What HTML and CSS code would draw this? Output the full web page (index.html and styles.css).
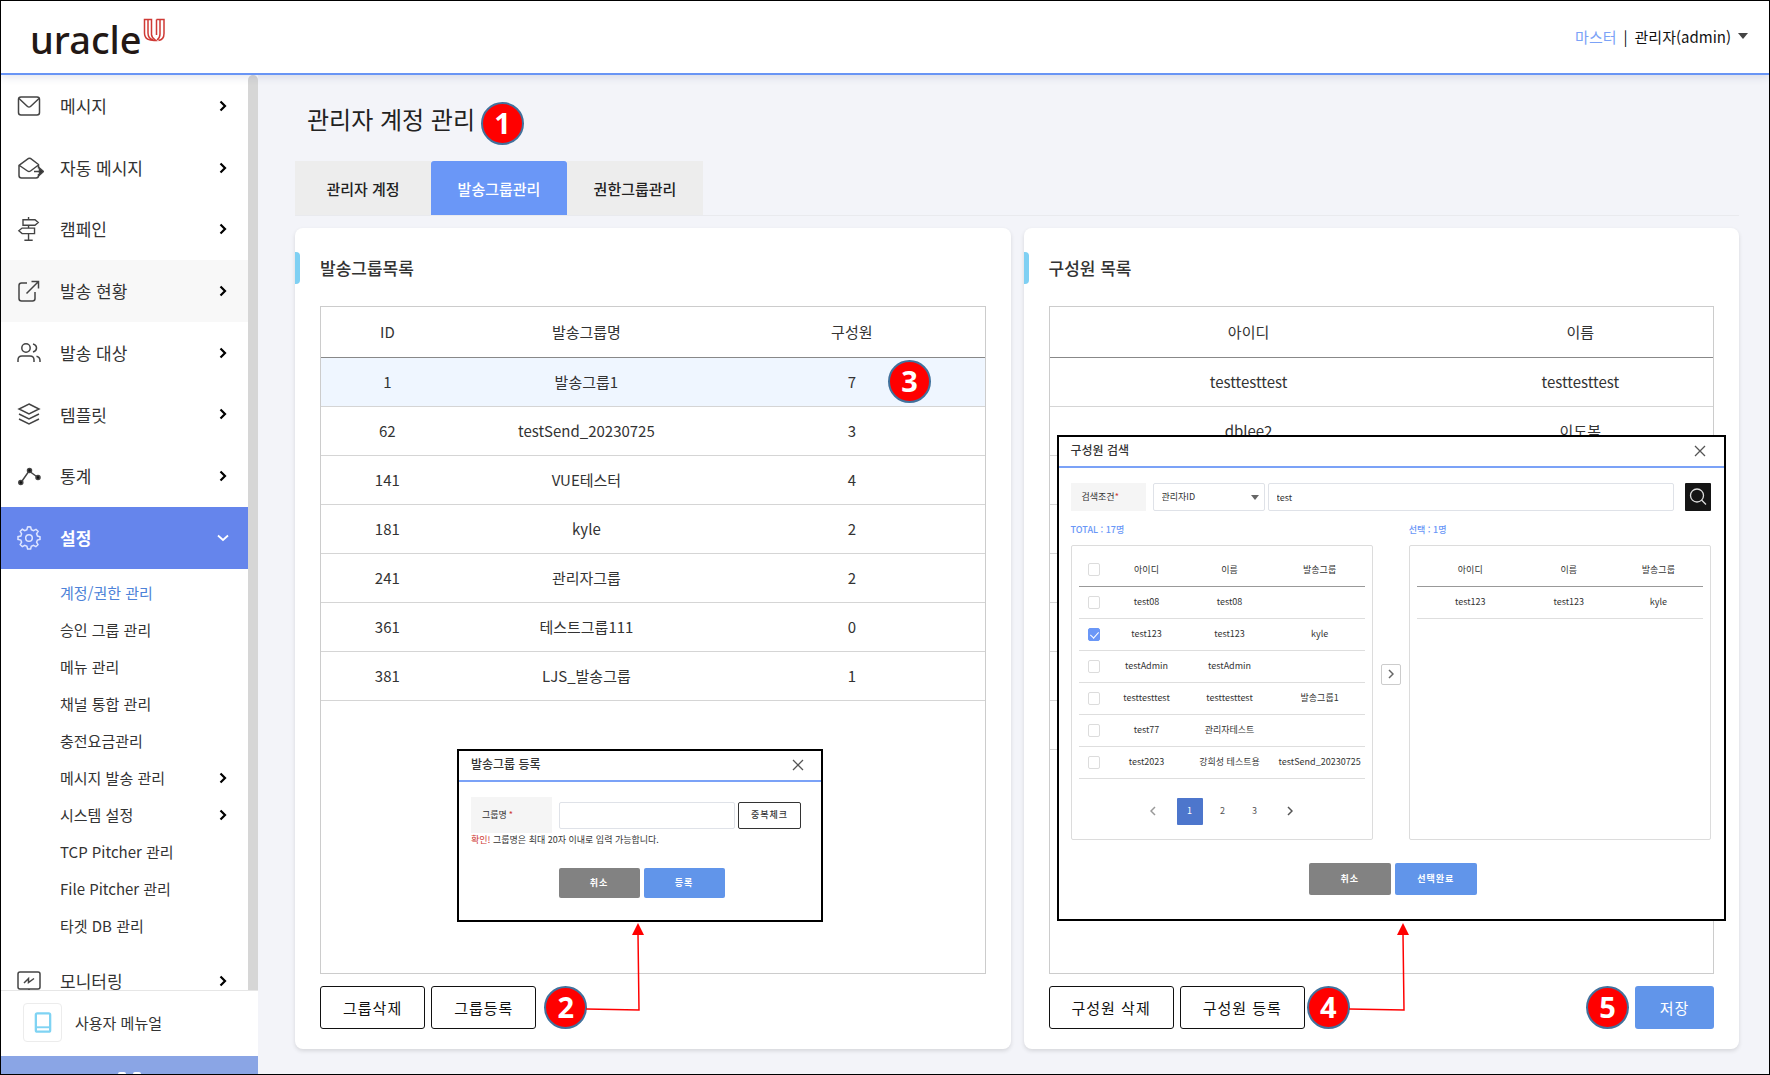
FILE: index.html
```html
<!DOCTYPE html>
<html lang="ko">
<head>
<meta charset="utf-8">
<title>관리자 계정 관리</title>
<link rel="stylesheet" href="styles.css">
</head>
<body>
<svg class="sprite" aria-hidden="true">
  <symbol id="chev" viewBox="0 0 8 12"><path d="M1.5 1.5 6 6l-4.500 4.500" fill="none" stroke="currentColor" stroke-width="2.200"/></symbol>
  <symbol id="thin-chev" viewBox="0 0 6 10"><path d="M1 1l4 4-4 4" fill="none" stroke="currentColor" stroke-width="1.500"/></symbol>
  <symbol id="close" viewBox="0 0 12 12"><path d="M1 1l10 10M11 1 1 11" fill="none" stroke="currentColor" stroke-width="1.300"/></symbol>
</svg>

<header class="topbar">
  <a class="logo" href="#" aria-label="uracle U"><span>uracle</span>
    <svg class="logo-mark" viewBox="0 0 22 24"><path d="M1.500 1.500h7v15c0 3.500 3.500 5 4.500 6-7 .5-11.500-1.500-11.500-7.500zM5 2v13c0 4 2 6 5 7M13.500 1.500h7.500v14c0 4-2 6.500-5.500 7M17 2v14c0 3-1.500 5-3 6M13.500 1.500v15.500" fill="none" stroke="#cf3a35" stroke-width="1.500"/></svg>
  </a>
  <div class="user"><span class="role">마스터</span><span class="bar">|</span><button class="user-name" type="button">관리자(admin)<i class="caret"></i></button></div>
</header>

<div class="shell">
  <aside class="sidebar">
    <div class="menu-scroll">
      <nav class="menu">
        <div class="menu-main">
          <a class="item" href="#"><svg class="ico" viewBox="0 0 24 24"><rect x="1.500" y="3" width="21" height="18" rx="2.500"/><path d="M2 4.500l8.500 8q1.500 1.200 3 0l8.500-8"/></svg>메시지<svg class="chev"><use href="#chev"/></svg></a>
          <a class="item" href="#"><svg class="ico wide" viewBox="0 0 27 24"><path d="M21.500 18v1.500q0 2.500-2.500 2.500H4.500Q2 22 2 19.500V9.500L11.500 2.500q1-.5 2 0L21.500 8.500v4M2.500 9.500l8 5.500q1.500 1 3 0l8-6M17 15.500h9"/><path d="M22.500 12l4 3.500-4 3.500z" fill="#333"/></svg>자동 메시지<svg class="chev"><use href="#chev"/></svg></a>
          <a class="item" href="#"><svg class="ico" viewBox="0 0 24 26"><path d="M11.500 0v3M11.500 9v3M11.500 18v7M7 25.200h9M5.500 3H18.500l3.500 3-3.500 3H5.500zM18 12H4.500L1 15l3.500 3H18z"/></svg>캠페인<svg class="chev"><use href="#chev"/></svg></a>
          <a class="item hovered" href="#"><svg class="ico" viewBox="0 0 24 24"><path d="M10 4H4.500Q2 4 2 6.500v13Q2 22 4.500 22h11q2.500 0 2.500-2.500V13M9.500 14.500 21 3M14.500 2.500H21.500V9.500"/></svg>발송 현황<svg class="chev"><use href="#chev"/></svg></a>
          <a class="item" href="#"><svg class="ico" viewBox="0 0 24 24"><circle cx="9" cy="7" r="4.200"/><path d="M1 21v-2q0-4 4-4h8q4 0 4 4v2M16 3q3.500 1 3.500 4T16 11M19.500 15.200q3.500.8 3.500 4.300V21"/></svg>발송 대상<svg class="chev"><use href="#chev"/></svg></a>
          <a class="item" href="#"><svg class="ico" viewBox="0 0 24 24"><path d="M12 2l10 5-10 5L2 7zM2 12l10 5 10-5M2 17l10 5 10-5"/></svg>템플릿<svg class="chev"><use href="#chev"/></svg></a>
          <a class="item" href="#"><svg class="ico" viewBox="0 0 24 24"><path d="M4 18.500 12 7l9 6.500"/><g fill="#111"><circle cx="3.800" cy="18.500" r="2"/><circle cx="12.500" cy="6.500" r="2"/><circle cx="21" cy="13.500" r="2"/></g></svg>통계<svg class="chev"><use href="#chev"/></svg></a>
        </div>
        <a class="item current" href="#"><svg class="ico" viewBox="0 0 24 24"><path d="M12 .8l1.600.2.800 2.800 2 .9L19 3.300l2.100 2.100-1.500 2.500.9 2.100 2.500.700v2.700l-2.600.700-.8 2.100 1.400 2.500-2.100 2-2.500-1.400-2.100.9-.7 2.700h-3l-.7-2.700-2.100-.9L5.300 20.700l-2.100-2 1.400-2.500-.8-2.100-2.800-.700v-2.700l2.800-.700.8-2.100L3.200 5.400l2.100-2.100 2.500 1.400 2.100-.9.700-2.900z"/><circle cx="12" cy="12" r="3.300"/></svg>설정<svg class="chev-down" viewBox="0 0 12 8"><path d="M1 1.500l5 4.500 5-4.500" fill="none" stroke="#fff" stroke-width="1.800"/></svg></a>
        <div class="submenu">
          <a class="sub active" href="#">계정/권한 관리</a>
          <a class="sub" href="#">승인 그룹 관리</a>
          <a class="sub" href="#">메뉴 관리</a>
          <a class="sub" href="#">채널 통합 관리</a>
          <a class="sub" href="#">충전요금관리</a>
          <a class="sub" href="#">메시지 발송 관리<svg class="chev"><use href="#chev"/></svg></a>
          <a class="sub" href="#">시스템 설정<svg class="chev"><use href="#chev"/></svg></a>
          <a class="sub" href="#">TCP Pitcher 관리</a>
          <a class="sub" href="#">File Pitcher 관리</a>
          <a class="sub" href="#">타겟 DB 관리</a>
        </div>
        <a class="item" href="#"><svg class="ico" viewBox="0 0 24 24"><rect x="1" y="3" width="22" height="17" rx="2"/><path d="M12 20v3M7 14l4.500-4.500v4L17 9.500" /></svg>모니터링<svg class="chev"><use href="#chev"/></svg></a>
      </nav>
      <div class="thumb"></div>
    </div>
    <a class="manual" href="#"><span class="manual-ico"><svg viewBox="0 0 18 22"><rect x="1.500" y="1.500" width="15" height="19" rx="1.500" fill="none" stroke="#7fd3f3" stroke-width="2.400"/><path d="M2 16h14" stroke="#7fd3f3" stroke-width="2"/></svg></span>사용자 메뉴얼</a>
    <button class="dash" type="button" aria-label="대시보드"><i></i><i></i></button>
  </aside>

  <main class="content">
    <h1 class="title">관리자 계정 관리<span class="badge">1</span></h1>
    <div class="tabs" role="tablist">
      <button class="tab" role="tab" type="button">관리자 계정</button>
      <button class="tab on" role="tab" type="button" aria-selected="true">발송그룹관리</button>
      <button class="tab" role="tab" type="button">권한그룹관리</button>
    </div>

    <div class="cards">
      <section class="card">
        <h2 class="card-title">발송그룹목록</h2>
        <div class="listbox">
          <table class="grid">
            <colgroup><col class="w20"><col class="w40"><col class="w40"></colgroup>
            <thead><tr><th>ID</th><th>발송그룹명</th><th>구성원</th></tr></thead>
            <tbody>
              <tr class="selected"><td>1</td><td>발송그룹1</td><td>7</td></tr>
              <tr><td>62</td><td>testSend_20230725</td><td>3</td></tr>
              <tr><td>141</td><td>VUE테스터</td><td>4</td></tr>
              <tr><td>181</td><td>kyle</td><td>2</td></tr>
              <tr><td>241</td><td>관리자그룹</td><td>2</td></tr>
              <tr><td>361</td><td>테스트그룹111</td><td>0</td></tr>
              <tr><td>381</td><td>LJS_발송그룹</td><td>1</td></tr>
            </tbody>
          </table>
        </div>
        <div class="actions">
          <button class="btn" type="button">그룹삭제</button>
          <button class="btn" type="button">그룹등록</button>
          <span class="badge">2</span>
        </div>
        <span class="badge pin-row">3</span>

        <div class="popup popup-group" role="dialog" aria-label="발송그룹 등록">
          <div class="popup-head"><h3>발송그룹 등록</h3><button class="x" type="button" aria-label="닫기"><svg><use href="#close"/></svg></button></div>
          <div class="popup-body">
            <div class="field">
              <label class="label tall" for="gname">그룹명 <em>*</em></label>
              <input class="text" id="gname" type="text">
              <button class="check-btn" type="button">중복체크</button>
            </div>
            <p class="hint"><em>확인!</em> 그룹명은 최대 20자 이내로 입력 가능합니다.</p>
            <div class="popup-actions"><button class="cancel" type="button">취소</button><button class="ok" type="button">등록</button></div>
          </div>
        </div>
        <svg class="arrow arrow-a" viewBox="0 0 60 92"><path d="M0 86l53 1-1-76" fill="none" stroke="#f00" stroke-width="1.500"/><path d="M52 0l6 12H46z" fill="#f00"/></svg>
      </section>

      <section class="card">
        <h2 class="card-title">구성원 목록</h2>
        <div class="listbox">
          <table class="grid">
            <colgroup><col class="w60"><col class="w40"></colgroup>
            <thead><tr><th>아이디</th><th>이름</th></tr></thead>
            <tbody>
              <tr><td>testtesttest</td><td>testtesttest</td></tr>
              <tr><td>dblee2</td><td>이도복</td></tr>
              <tr><td></td><td></td></tr>
              <tr><td></td><td></td></tr>
              <tr><td></td><td></td></tr>
              <tr><td></td><td></td></tr>
              <tr><td></td><td></td></tr>
              <tr><td></td><td></td></tr>
            </tbody>
          </table>
        </div>
        <div class="actions">
          <button class="btn" type="button">구성원 삭제</button>
          <button class="btn" type="button">구성원 등록</button>
          <span class="badge near">4</span>
          <span class="badge end">5</span>
          <button class="btn save" type="button">저장</button>
        </div>

        <div class="popup popup-member" role="dialog" aria-label="구성원 검색">
          <div class="popup-head"><h3>구성원 검색</h3><button class="x" type="button" aria-label="닫기"><svg><use href="#close"/></svg></button></div>
          <div class="popup-body">
            <div class="search">
              <label class="label" for="kw">검색조건<em>*</em></label>
              <span class="select"><select aria-label="검색조건"><option>관리자ID</option></select></span>
              <input class="text" id="kw" type="text" value="test">
              <button class="find" type="button" aria-label="검색"><svg viewBox="0 0 18 18"><circle cx="8" cy="7.500" r="6.500"/><path d="M12.500 12l4.500 4.500"/></svg></button>
            </div>
            <div class="transfer">
              <div class="side">
                <p class="count">TOTAL : 17명</p>
                <div class="side-box">
                  <table class="mini source">
                    <colgroup><col class="c-check"><col class="c-id"><col class="c-name"><col></colgroup>
                    <thead><tr><th><input type="checkbox" aria-label="전체 선택"></th><th>아이디</th><th>이름</th><th>발송그룹</th></tr></thead>
                    <tbody>
                      <tr><td><input type="checkbox" aria-label="test08"></td><td>test08</td><td>test08</td><td></td></tr>
                      <tr><td><input type="checkbox" aria-label="test123" checked></td><td>test123</td><td>test123</td><td>kyle</td></tr>
                      <tr><td><input type="checkbox" aria-label="testAdmin"></td><td>testAdmin</td><td>testAdmin</td><td></td></tr>
                      <tr><td><input type="checkbox" aria-label="testtesttest"></td><td>testtesttest</td><td>testtesttest</td><td>발송그룹1</td></tr>
                      <tr><td><input type="checkbox" aria-label="test77"></td><td>test77</td><td>관리자테스트</td><td></td></tr>
                      <tr><td><input type="checkbox" aria-label="test2023"></td><td>test2023</td><td>강희성 테스트용</td><td>testSend_20230725</td></tr>
                    </tbody>
                  </table>
                  <div class="pager">
                    <button type="button" class="prev" aria-label="이전"><svg><use href="#thin-chev"/></svg></button>
                    <button type="button" class="page now">1</button>
                    <button type="button" class="page">2</button>
                    <button type="button" class="page">3</button>
                    <button type="button" class="next" aria-label="다음"><svg><use href="#thin-chev"/></svg></button>
                  </div>
                </div>
              </div>
              <button class="move" type="button" aria-label="추가"><svg><use href="#thin-chev"/></svg></button>
              <div class="side">
                <p class="count">선택 : 1명</p>
                <div class="side-box">
                  <table class="mini">
                    <colgroup><col class="c-id2"><col class="c-name"><col></colgroup>
                    <thead><tr><th>아이디</th><th>이름</th><th>발송그룹</th></tr></thead>
                    <tbody><tr><td>test123</td><td>test123</td><td>kyle</td></tr></tbody>
                  </table>
                </div>
              </div>
            </div>
            <div class="popup-actions"><button class="cancel" type="button">취소</button><button class="ok" type="button">선택완료</button></div>
          </div>
        </div>
        <svg class="arrow arrow-b" viewBox="0 0 60 92"><path d="M0 86l55 1-1-76" fill="none" stroke="#f00" stroke-width="1.500"/><path d="M54 0l6 12H48z" fill="#f00"/></svg>
      </section>
    </div>
  </main>
</div>
</body>
</html>
```
FILE: styles.css
```css
* { box-sizing: border-box; }

body {
  margin: 0;
  height: 100vh;
  min-height: 800px;
  display: flex;
  flex-direction: column;
  border: 1px solid #000;
  background: #f3f4f9;
  color: #333;
  font: 15px/1.4 "Noto Sans CJK KR", "Noto Sans", sans-serif;
}

a { color: inherit; text-decoration: none; }
button, input, select { font: inherit; color: inherit; margin: 0; padding: 0; border: 0; background: none; }
h1, h2, h3, p { margin: 0; font-weight: 400; }
em { font-style: normal; color: #cf3a35; }
svg { display: block; flex: none; }
.sprite { position: absolute; width: 0; height: 0; }

/* top bar */
.topbar {
  flex: none;
  height: 74px;
  display: flex;
  align-items: center;
  justify-content: space-between;
  padding: 0 21px 2px 29px;
  background: #fff;
  border-bottom: 2px solid #6995f5;
  box-shadow: 0 2px 8px rgba(40, 60, 110, .14);
  position: relative;
  z-index: 1;
}
.logo { display: flex; align-items: flex-start; gap: 1px; height: 36px; }
.logo span { font: 500 38px/42px "Noto Sans", sans-serif; color: #231815; }
.logo-mark { width: 22px; height: 24px; }
.user { display: flex; align-items: center; gap: 7px; color: #111; }
.role { color: #7ba2f7; }
.user-name { display: flex; align-items: center; gap: 7px; }
.caret { border: 5px solid transparent; border-top: 6px solid #444; border-bottom: 0; }

.shell { flex: 1; display: flex; min-height: 0; }

/* sidebar */
.sidebar { flex: none; width: 257px; display: flex; flex-direction: column; background: #fff; }
.menu-scroll { flex: 1; min-height: 0; display: flex; overflow: hidden; }
.menu { flex: 1; }
.thumb { flex: none; width: 10px; background: #d6d6d6; border-radius: 5px 5px 0 0; }
.menu-main { display: grid; grid-auto-rows: 1fr; height: 432px; }
.item {
  display: flex;
  align-items: center;
  min-height: 61px;
  padding: 0 21px 0 16px;
  font-size: 17px;
}
.ico { width: 24px; height: 24px; margin-right: 19px; fill: none; stroke: #444; stroke-width: 1.5; }
.ico.wide { width: 27px; margin-right: 16px; }
.chev { width: 8px; height: 12px; margin-left: auto; color: #000; }
.chev-down { width: 12px; height: 8px; margin-left: auto; }
.hovered { background: #f8f8f8; }
.current { min-height: 62px; background: #6585ec; color: #fff; font-weight: 700; padding-right: 19px; }
.current .ico { stroke: #dfe6ff; }
.submenu { padding: 5px 21px 6px 59px; }
.sub { display: flex; align-items: center; height: 37px; }
.sub.active { color: #4d82d8; }
.manual {
  flex: none;
  height: 66px;
  display: flex;
  align-items: center;
  gap: 13px;
  padding: 0 0 2px 22px;
  border-top: 1px solid #e6e6e6;
}
.manual-ico { width: 39px; height: 39px; display: grid; place-items: center; border: 1px solid #ececec; border-radius: 4px; }
.manual-ico svg { width: 18px; height: 21px; }
.dash { flex: none; height: 18px; display: flex; justify-content: center; align-items: flex-end; gap: 7px; background: #8aa5e5; }
.dash i { width: 8px; height: 2px; background: #fff; border-radius: 2px 2px 0 0; }

/* content */
.content { flex: 1; min-width: 0; display: flex; flex-direction: column; padding: 22px 30px 25px 37px; }
.title { display: flex; align-items: flex-start; gap: 6px; height: 49px; padding-left: 12px; font-size: 24px; line-height: 44px; color: #222; }
.badge {
  flex: none;
  width: 43px;
  height: 43px;
  border: 2px solid #41719c;
  border-radius: 50%;
  background: #f00;
  color: #fff;
  font: 700 29px/37px "Noto Sans", sans-serif;
  text-align: center;
}
.title .badge { margin-top: 5px; }
.tabs { display: flex; margin-top: 15px; border-bottom: 1px solid #e9eaee; }
.tab { width: 136px; height: 54px; background: #ededed; color: #222; font-weight: 500; }
.tab.on { background: #6a97f7; color: #fff; border-radius: 3px 3px 0 0; }

.cards { flex: 1; display: grid; grid-template-columns: 1fr 1fr; gap: 13px; margin-top: 12px; }
.card {
  position: relative;
  display: flex;
  flex-direction: column;
  padding: 24px 25px 20px;
  background: #fff;
  border-radius: 8px;
  box-shadow: 0 2px 4px rgba(0, 0, 0, .12);
}
.card-title {
  display: flex;
  gap: 20px;
  margin: 0 -25px 22px;
  font-size: 17px;
  line-height: 32px;
  font-weight: 500;
}
.card-title::before { content: ""; width: 5px; background: #7fd0f3; border-radius: 0 4px 4px 0; }
.listbox { flex: 1; border: 1px solid #ccc; }
.grid { width: 100%; table-layout: fixed; border-collapse: collapse; text-align: center; }
.grid th, .grid td { height: 49px; padding: 0; font-weight: 400; border-bottom: 1px solid #d5d5d5; }
.grid thead th { height: 50px; border-bottom-color: #888; }
.w20 { width: 20%; }
.w40 { width: 40%; }
.w60 { width: 60%; }
.selected { background: #eff6ff; }

.actions { display: flex; gap: 6px; margin-top: 12px; }
.btn { height: 43px; padding: 0 22px; border: 1px solid #111; border-radius: 3px; background: #fff; color: #111; letter-spacing: 1px; }
.actions .badge { margin-left: 2px; }
.actions .badge.near { margin-left: -4px; }
.actions .badge.end { margin-left: auto; }
.btn.save { width: 79px; padding: 0; border: 0; background: #6195ea; color: #fff; }
.pin-row { position: absolute; left: 593px; top: 132px; }

/* dialogs */
.popup { position: absolute; border: 2px solid #000; background: #fff; font-size: 9px; line-height: 12px; }
.popup-group { left: 162px; top: 521px; width: 366px; height: 173px; }
.popup-member { left: 33px; right: 13px; top: 207px; height: 486px; }
.popup-head {
  display: flex;
  justify-content: space-between;
  height: 31px;
  padding: 0 17px 0 12px;
  border-bottom: 2px solid #7ba2f7;
}
.popup-member .popup-head { padding-right: 18px; }
.popup-head h3 { font-size: 12px; line-height: 25px; font-weight: 500; }
.x { height: 27px; color: #555; }
.x svg { width: 12px; height: 12px; }
.popup-body { padding: 15px 13px 0 12px; }
.field { display: flex; align-items: center; padding-right: 7px; }
.label { flex: none; width: 75px; height: 28px; padding-left: 11px; display: flex; align-items: center; background: #f5f5f5; }
.label.tall { width: 81px; height: 36px; gap: 2px; margin-right: 7px; }
.text { flex: 1; min-width: 0; height: 27px; border: 1px solid #dfe2e8; border-radius: 2px; padding: 0 8px; }
.check-btn { width: 63px; height: 27px; margin-left: 3px; border: 1px solid #333; border-radius: 2px; font-weight: 500; letter-spacing: 1px; }
.hint { line-height: 14px; }
.popup-actions { display: flex; justify-content: center; gap: 4px; margin-top: 21px; padding-left: 4px; color: #fff; }
.popup-actions button { width: 82px; height: 32px; border-radius: 2px; font-weight: 700; letter-spacing: 1px; }
.popup-group .popup-actions button { height: 30px; width: 81px; }
.cancel { background: #828282; }
.ok { background: #6195ea; }

.search { display: flex; gap: 3px; }
.search .text, .select, .find { height: 28px; }
.select { position: relative; width: 112px; margin-left: 4px; }
.select select { appearance: none; width: 100%; height: 100%; padding-left: 8px; border: 1px solid #dfe2e8; border-radius: 2px; background: #fff; }
.select::after { content: ""; position: absolute; right: 6px; top: 12px; border: 4px solid transparent; border-top: 5px solid #666; border-bottom: 0; }
.find { width: 26px; margin-left: 8px; display: grid; place-items: center; background: #151515; border-radius: 1px; }
.find svg { width: 18px; height: 18px; fill: none; stroke: #ddd; stroke-width: 1.3; }
.transfer { display: grid; grid-template-columns: 1fr 20px 1fr; gap: 8px; align-items: center; margin-top: 12px; }
.count { color: #6a97f7; font-weight: 500; line-height: 14px; }
.side-box { height: 295px; margin-top: 8px; padding: 8px 7px; border: 1px solid #dcdcdc; border-radius: 2px; }
.mini { width: 100%; table-layout: fixed; border-collapse: collapse; text-align: center; white-space: nowrap; }
.mini th, .mini td { height: 32px; padding: 0; font-weight: 400; border-bottom: 1px solid #dedede; }
.mini thead th { border-bottom-color: #999; }
.c-check { width: 30px; }
.c-id { width: 76px; }
.c-id2 { width: 107px; }
.c-name { width: 90px; }
.mini input {
  appearance: none;
  display: block;
  width: 12px;
  height: 13px;
  margin: 0 auto;
  border: 1px solid #dcdcdc;
  border-radius: 2px;
}
.mini input:checked { position: relative; background: #6a97f7; border-color: #6a97f7; }
.mini input:checked::after {
  content: "";
  position: absolute;
  left: 3px;
  top: 1px;
  width: 4px;
  height: 7px;
  border: solid #fff;
  border-width: 0 1px 1px 0;
  transform: rotate(42deg);
}
.pager { display: flex; align-items: center; margin: 19px 0 0 64px; color: #555; }
.pager svg { width: 6px; height: 10px; margin: 0 auto; }
.prev, .next { width: 20px; }
.prev { color: #999; }
.prev svg { transform: rotate(180deg); }
.next { margin-left: 9px; }
.page { width: 32px; height: 27px; }
.page.now { width: 26px; margin: 0 4px 0 14px; background: #4d76cc; color: #fff; border-radius: 1px; }
.move { width: 20px; height: 21px; border: 1px solid #ccc; border-radius: 2px; margin-top: -15px; color: #666; }
.move svg { width: 6px; height: 10px; margin: 0 auto; }
.popup-member .popup-actions { margin-top: 23px; }

/* annotation arrows */
.arrow { position: absolute; width: 60px; height: 92px; overflow: visible; }
.arrow-a { left: 291px; top: 695px; }
.arrow-b { left: 325px; top: 695px; }
```
